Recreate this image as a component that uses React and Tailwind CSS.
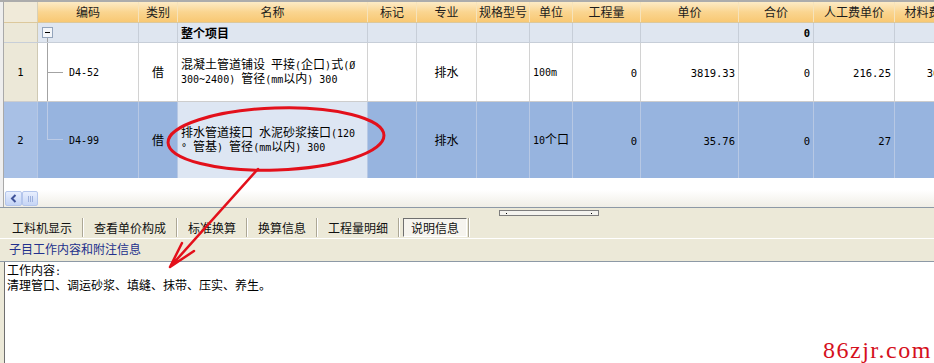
import { Fragment } from "react";

const COLS =
  "grid grid-cols-[34px_101px_39px_190px_49px_60px_53px_43px_68px_98px_75px_81px_80px]";

const HEADERS = ["编码", "类别", "名称", "标记", "专业", "规格型号", "单位", "工程量", "单价", "合价", "人工费单价", "材料费单价"];

// alignment of the columns after 编码
const ALIGN = [
  "justify-center",
  "justify-start pl-[3px]",
  "justify-center",
  "justify-center",
  "justify-center",
  "justify-start pl-[3px]",
  "justify-end pr-[3px]",
  "justify-end pr-[3px]",
  "justify-end pr-[3px]",
  "justify-end pr-[3px]",
  "justify-end pr-[3px]",
];

const ROWS = [
  {
    n: "1",
    code: "D4-52",
    last: false,
    vals: ["借", "混凝土管道铺设 平接(企口)式(Ø\n300~2400) 管径(mm以内) 300", "", "排水", "", "100m", "0", "3819.33", "0", "216.25", "3603.08"],
    h: "h-[59px] border-b border-[#cdcdcd]",
    num: "bg-[#ece8d8] border-[#cfc9b4]",
    cell: "bg-white border-[#d2d2d2]",
    name: "bg-white border-[#d2d2d2]",
    tree: "border-[#a3a3a3]",
    hline: "bg-[#a3a3a3]",
  },
  {
    n: "2",
    code: "D4-99",
    last: true,
    vals: ["借", "排水管道接口 水泥砂浆接口(120\n° 管基) 管径(mm以内) 300", "", "排水", "", "10个口", "0", "35.76", "0", "27", "8.76"],
    h: "h-[76px]",
    num: "bg-[#a8c0e5] border-[#b7c8e4]",
    cell: "bg-[#97b4df] border-[#b7c8e4]",
    name: "bg-[#dde6f3] border-[#b7c8e4]",
    tree: "border-[#bccbe6]",
    hline: "bg-[#bccbe6]",
  },
];

const TABS = ["工料机显示", "查看单价构成", "标准换算", "换算信息", "工程量明细"];

const ASCII = /^[\x20-\x7e\u00b0\u00d8]+$/;

// SimSun-like mix: CJK at 12px, latin half width
function Mix({ text, num, bold }) {
  return text
    .split(/([\x20-\x7e\u00b0\u00d8]+)/)
    .filter(Boolean)
    .map((p, i) =>
      ASCII.test(p) ? (
        <span
          key={i}
          className={`font-['DejaVu_Sans_Mono',monospace] ${num ? "text-[10.5px]" : "text-[10px]"} ${bold ? "font-bold" : ""}`}
        >
          {p}
        </span>
      ) : (
        <span key={i} className={bold ? "font-bold" : ""}>
          {p}
        </span>
      )
    );
}

function Sep() {
  return <div className="w-[2px] h-[19px] border-l border-[#aca795] border-r border-r-white" />;
}

function DataRow({ row }) {
  return (
    <div className={`${COLS} ${row.h}`}>
      <div className={`flex items-center justify-center border-r ${row.num}`}>
        <Mix text={row.n} num />
      </div>
      <div className={`flex items-center border-r pl-[9px] ${row.cell}`}>
        {row.last ? (
          <div className={`self-start h-[38px] w-[16px] border-l border-b ${row.tree}`} />
        ) : (
          <div className={`self-stretch w-[16px] border-l flex items-center ${row.tree}`}>
            <div className={`h-px w-full ${row.hline}`} />
          </div>
        )}
        <span className="ml-[6px]">
          <Mix text={row.code} />
        </span>
      </div>
      {row.vals.map((v, i) => (
        <div
          key={i}
          className={`flex items-center border-r whitespace-pre overflow-hidden ${ALIGN[i]} ${i === 1 ? row.name : row.cell}`}
        >
          <div>
            {v.split("\n").map((line, j) => (
              <div key={j}>
                <Mix text={line} num={i > 5} />
              </div>
            ))}
          </div>
        </div>
      ))}
    </div>
  );
}

export default function App() {
  return (
    <div className="relative w-[934px] h-[363px] overflow-hidden bg-white font-['Noto_Sans_CJK_SC',sans-serif] text-[12px] leading-[12px] text-black">
      {/* grid */}
      <div className="flex h-[207px]">
        <div className="w-[4px] shrink-0 bg-[#eeeeee] border-r border-[#a9a9a9] border-t-2 border-t-[#acacac]" />
        <div className="flex-1 min-w-0 overflow-hidden flex flex-col border-t-2 border-[#acacac]">
          <div className={`${COLS} h-[21px] border-b border-[#dcc89c]`}>
            <div className="bg-[#f0ead9] border-r border-[#d8d0b8]" />
            {HEADERS.map((h) => (
              <div
                key={h}
                className="flex items-center justify-center whitespace-nowrap bg-linear-to-b from-[#fdebc6] via-[#fad590] to-[#f8c873] border-r border-[#f6e3bb] text-[#1c1c1c]"
              >
                {h}
              </div>
            ))}
          </div>

          <div className={`${COLS} h-[20px] border-b border-[#c7ced8]`}>
            <div className="bg-[#ece8d8] border-r border-[#cfc9b4]" />
            <div className="flex flex-col pl-[4px] pt-[4px] bg-[#dfe6f0] border-r border-[#c7ced8]">
              <div className="w-[11px] h-[11px] border border-[#93a4bb] bg-[#f4f6f9] flex items-center justify-center">
                <div className="w-[5px] h-px bg-black" />
              </div>
              <div className="flex-1 ml-[5px] border-l border-[#a3a3a3]" />
            </div>
            {HEADERS.slice(1).map((h, i) => (
              <div key={h} className={`flex items-center bg-[#dfe6f0] border-r border-[#c7ced8] ${ALIGN[i]}`}>
                {i === 1 && <span className="font-bold">整个项目</span>}
                {i === 8 && <Mix text="0" num bold />}
              </div>
            ))}
          </div>

          {ROWS.map((r) => (
            <DataRow key={r.n} row={r} />
          ))}

          <div className="h-[12px]" />

          {/* horizontal scrollbar */}
          <div className="h-[17px] flex items-center bg-linear-to-b from-white to-[#f0eee6]">
            <div className="ml-[1px] w-[17px] h-[15px] rounded-[2px] border border-[#b4c6ec] bg-linear-to-b from-[#e8effe] to-[#c3d3f5] flex items-center justify-center">
              <svg width="7" height="9" viewBox="0 0 7 9">
                <path d="M5.5 1 L2 4.5 L5.5 8" fill="none" stroke="#3f5399" strokeWidth="2" />
              </svg>
            </div>
            <div className="w-[16px] h-[15px] rounded-[2px] border border-[#b4c6ec] bg-linear-to-b from-[#e8effe] to-[#c6d5f5] flex items-center justify-center gap-[1px]">
              <div className="w-px h-[6px] bg-[#9db0dc]" />
              <div className="w-px h-[6px] bg-[#9db0dc]" />
              <div className="w-px h-[6px] bg-[#9db0dc]" />
            </div>
          </div>
        </div>
      </div>

      {/* bottom panel */}
      <div className="h-[156px] flex flex-col bg-[#ece9d8] border-t border-[#8d99a6]">
        <div className="h-[9px] pl-[499px] pt-[2px]">
          <div className="w-[100px] h-[6px] border border-[#7d7d7d] bg-[#f4f3ee] flex items-center justify-between px-[6px]">
            <div className="w-px h-px bg-black" />
            <div className="w-px h-px bg-black" />
          </div>
        </div>

        <div className="h-[21px] flex items-center pl-[2px]">
          {TABS.map((t) => (
            <Fragment key={t}>
              <div className="px-[10px] text-[#111]">{t}</div>
              <Sep />
            </Fragment>
          ))}
          <div className="ml-[3px] h-[19px] px-[7px] flex items-center bg-[#f6f4ee] border border-t-[#6f6f6f] border-l-[#6f6f6f] border-b-white border-r-white text-[#111]">
            说明信息
          </div>
          <div className="ml-[1px]">
            <Sep />
          </div>
        </div>

        <div className="h-px bg-white" />

        <div className="h-[23px] flex items-center pl-[9px] pb-[2px] border-b border-[#8d99a6] text-[#22308c]">
          子目工作内容和附注信息
        </div>

        <div className="flex-1 pl-[4px] flex">
          <div className="flex-1 bg-white border-l border-[#6f6f6f] pl-[2px] pt-[1px] leading-[13px]">
            <div>
              <Mix text="工作内容:" />
            </div>
            <div>清理管口、调运砂浆、填缝、抹带、压实、养生。</div>
          </div>
        </div>
      </div>

      {/* red annotation */}
      <svg className="absolute inset-0 pointer-events-none" width="934" height="363" viewBox="0 0 934 363">
        <ellipse
          cx="276"
          cy="139"
          rx="108"
          ry="31"
          transform="rotate(-2 276 139)"
          fill="none"
          stroke="#e3101b"
          strokeWidth="3"
        />
        <path
          d="M258 169 L170 267 M170 267 L182 243 M170 267 L194 251"
          fill="none"
          stroke="#e3101b"
          strokeWidth="2.5"
          strokeLinecap="round"
        />
      </svg>

      <div className="absolute left-[823px] top-[338px] font-['Liberation_Serif',serif] text-[24px] leading-[24px] tracking-[1.5px] text-[#d5101c]">
        86zjr.com
      </div>
    </div>
  );
}
